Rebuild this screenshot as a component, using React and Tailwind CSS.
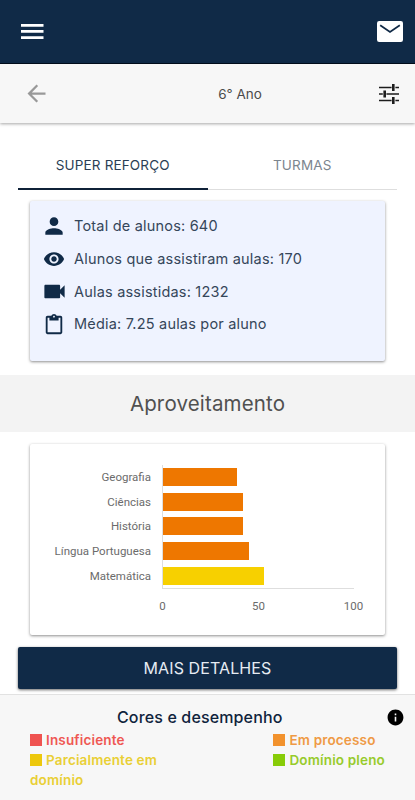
import React from "react";

const stats = [
  { text: "Total de alunos: 640", d: "M12 12c2.21 0 4-1.79 4-4s-1.79-4-4-4-4 1.79-4 4 1.79 4 4 4zm0 2c-2.67 0-8 1.34-8 4v2h16v-2c0-2.66-5.33-4-8-4z", size: "size-[26px]" },
  { text: "Alunos que assistiram aulas: 170", d: "M12 4.5C7 4.5 2.73 7.61 1 12c1.73 4.39 6 7.5 11 7.5s9.27-3.11 11-7.5c-1.73-4.39-6-7.5-11-7.5zM12 17c-2.76 0-5-2.24-5-5s2.24-5 5-5 5 2.24 5 5-2.24 5-5 5zm0-8c-1.66 0-3 1.34-3 3s1.34 3 3 3 3-1.34 3-3-1.34-3-3-3z", size: "size-[22px]" },
  { text: "Aulas assistidas: 1232", d: "M17 10.5V7c0-.55-.45-1-1-1H4c-.55 0-1 .45-1 1v10c0 .55.45 1 1 1h12c.55 0 1-.45 1-1v-3.5l4 4v-11l-4 4z", size: "size-[27px]" },
  { text: "Média: 7.25 aulas por aluno", d: "M19 2h-4.18C14.4.84 13.3 0 12 0c-1.3 0-2.4.84-2.82 2H5c-1.1 0-2 .9-2 2v16c0 1.1.9 2 2 2h14c1.1 0 2-.9 2-2V4c0-1.1-.9-2-2-2zm-7 0c.55 0 1 .45 1 1s-.45 1-1 1-1-.45-1-1 .45-1 1-1zm7 18H5V4h2v3h10V4h2v16z", size: "size-[22px] mt-0.5" },
];

const bars = [
  { label: "Geografia", value: 39, color: "bg-[#ee7700]" },
  { label: "Ciências", value: 42, color: "bg-[#ee7700]" },
  { label: "História", value: 42, color: "bg-[#ee7700]" },
  { label: "Língua Portuguesa", value: 45, color: "bg-[#ee7700]" },
  { label: "Matemática", value: 53, color: "bg-[#f7d000]" },
];

function Icon({ d, className }) {
  return (
    <svg viewBox="0 0 24 24" fill="currentColor" className={`shrink-0 ${className}`}>
      <path d={d} />
    </svg>
  );
}

function Legend({ children, text, square }) {
  return (
    <div className={`text-[13.5px] leading-5 font-semibold tracking-[0.16px] ${text}`}>
      <span className={`mr-1 inline-block size-3 align-[-1px] ${square}`} />
      {children}
    </div>
  );
}

export default function App() {
  return (
    <div className="flex h-[800px] w-[415px] flex-col overflow-hidden bg-white font-['Inter',sans-serif] whitespace-nowrap">
      <header className="flex h-16 shrink-0 items-center justify-between border-b border-[#020d1c] bg-[#102a47] pr-3 pl-[21px] text-white">
        <svg viewBox="0 0 23 15" className="h-[15px] w-[23px]" fill="currentColor">
          <path d="M0 0h22.5v2.7H0zM0 6.1h22.5v2.7H0zM0 12.2h22.5v2.7H0z" />
        </svg>
        <svg viewBox="0 0 26 21" className="h-[21px] w-[26px]">
          <rect width="26" height="21" rx="2.2" fill="currentColor" />
          <path d="M3.2 4.3 13 10.9l9.8-6.6" fill="none" stroke="#102a47" strokeWidth="1.8" />
        </svg>
      </header>
      <div className="z-10 flex h-[59px] shrink-0 items-center justify-between bg-[#f7f7f7] pr-4 pl-[23px] shadow-[0_1px_3px_rgba(0,0,0,0.35)]">
        <Icon className="size-[27px] text-[#999]" d="M20 11H7.83l5.59-5.59L12 4l-8 8 8 8 1.41-1.41L7.83 13H20v-2z" />
        <span className="ml-[51px] pt-px text-[13.5px] text-[#4b4b4b]">6° Ano</span>
        <svg viewBox="0 0 20 20" className="size-5" stroke="#1d1d1d" fill="none">
          <path strokeWidth="1.4" d="M0 3.5h12.6M16.4 3.5H20M0 10h3.8M7.4 10H20M0 16.5h12.6M16.4 16.5H20" />
          <path strokeWidth="2.6" d="M14.3 0v7M5.7 6.5v7M14.3 13v7" />
        </svg>
      </div>

      <nav className="mx-[18px] mt-[18px] flex h-[49px] shrink-0 text-[13.5px] tracking-[0.15px]">
        <div className="flex flex-1 items-center justify-center border-b-2 border-[#0f2138] pt-px text-[#2a3e55]">SUPER REFORÇO</div>
        <div className="flex flex-1 items-center justify-center border-b border-[#dedede] text-[#7c858e]">TURMAS</div>
      </nav>

      <section className="mx-[30px] mt-[11px] flex h-40 shrink-0 flex-col rounded-[2px] bg-[#eff3ff] pt-[9px] pl-2.5 text-[14.5px] tracking-[0.2px] text-[#35465a] shadow-[0_1px_3px_rgba(0,0,0,0.45)]">
        {stats.map((s) => (
          <div key={s.text} className="flex h-[32.6px] items-center">
            <span className="flex w-7 justify-center text-[#102a47]"><Icon d={s.d} className={s.size} /></span>
            <span className="ml-1.5">{s.text}</span>
          </div>
        ))}
      </section>

      <h2 className="mt-[14px] flex h-[57px] shrink-0 items-center justify-center bg-[#f3f3f3] pt-px text-[20.5px] tracking-[0.15px] text-[#505050]">Aproveitamento</h2>

      <section className="mx-[30px] mt-3 flex h-[191px] shrink-0 flex-col rounded-[2px] bg-white pt-[21px] font-['Roboto',sans-serif] text-[11.5px] text-[#6b6b6b] shadow-[0_1px_3px_rgba(0,0,0,0.45)]">
        <div className="flex h-[124px]">
          <div className="flex w-[121px] flex-col text-right">
            {bars.map((b) => (
              <span key={b.label} className="flex h-[24.8px] items-center justify-end">{b.label}</span>
            ))}
          </div>
          <div className="ml-[11px] flex w-[192px] flex-col border-b border-l border-[#dedede]">
            {bars.map((b) => (
              <div key={b.label} className="flex h-[24.8px] items-center">
                <div className={`h-[18px] ${b.color}`} style={{ width: `${b.value}%` }} />
              </div>
            ))}
          </div>
        </div>
        <div className="mt-[9px] ml-[112px] grid w-[231px] grid-cols-[41px_151px_39px] text-center">
          <span>0</span>
          <span>50</span>
          <span>100</span>
        </div>
      </section>

      <button className="mx-[18px] mt-3 h-[42px] shrink-0 rounded-[2px] bg-[#102a47] text-[16px] tracking-[0.1px] text-[#e6ecf3] shadow-[0_1px_3px_rgba(0,0,0,0.6)]">MAIS DETALHES</button>

      <footer className="mt-[5px] flex-1 border-t border-[#e2e2e2] bg-[#f7f7f7] pt-2.5">
        <div className="flex items-center justify-between pr-2.5 pl-[117px]">
          <h3 className="text-[16px] leading-6 font-medium tracking-[0.14px] text-[#0f233c]">Cores e desempenho</h3>
          <Icon className="size-[19px] text-black" d="M12 2C6.48 2 2 6.48 2 12s4.48 10 10 10 10-4.48 10-10S17.52 2 12 2zm1 15h-2v-6h2v6zm0-8h-2V7h2v2z" />
        </div>
        <div className="mx-[30px] mt-px flex justify-between">
          <div>
            <Legend text="text-[#ef5753]" square="bg-[#ef5350]">Insuficiente</Legend>
            <Legend text="text-[#e9cf35]" square="bg-[#edc80c]">Parcialmente em<br />domínio</Legend>
          </div>
          <div>
            <Legend text="text-[#ef9a45]" square="bg-[#f2922d]">Em processo</Legend>
            <Legend text="text-[#97cb2c]" square="bg-[#88cc08]">Domínio pleno</Legend>
          </div>
        </div>
      </footer>
    </div>
  );
}
